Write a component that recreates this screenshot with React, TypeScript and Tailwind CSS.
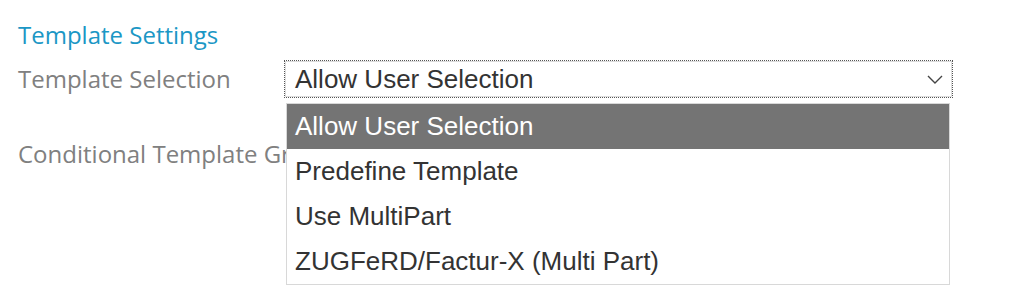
const options = [
  "Allow User Selection",
  "Predefine Template",
  "Use MultiPart",
  "ZUGFeRD/Factur-X (Multi Part)",
];

const labelFont = "font-['Open_Sans','Noto_Sans',sans-serif]";
const selectFont = "font-['Liberation_Sans',Arial,sans-serif]";

function Chevron() {
  return (
    <svg width="16" height="9" viewBox="0 0 16 9" fill="none" className="text-[#444]">
      <polyline points="1,1 8,8 15,1" stroke="currentColor" strokeWidth="1.4" />
    </svg>
  );
}

export default function App() {
  const selected = 0;

  return (
    <div className="h-[304px] w-[1024px] overflow-hidden bg-white">
      <div className="px-[18px] pt-[21px]">
        <h2 className={`${labelFont} text-[24px] leading-[28px] text-[#1b97c5]`}>Template Settings</h2>
        <div className="mt-[12px] grid grid-cols-[267px_667px] items-center">
          <span className={`${labelFont} text-[24px] leading-[36px] text-[#808080]`}>Template Selection</span>
          <div className="relative">
            <div className="outline-1 outline-dotted outline-[#555] outline-offset-0">
              <div className="flex h-[36px] items-center border border-[#dcdcdc] pl-[9px] pr-[8px]">
                <span className={`${selectFont} flex-1 text-[26px] leading-none text-[#333]`}>{options[selected]}</span>
                <Chevron />
              </div>
            </div>
            <ul className="absolute left-[1px] top-[42px] z-10 w-[664px] border border-[#d8d8d8] bg-white">
              {options.map((o, i) => (
                <li
                  key={o}
                  className={`${selectFont} flex h-[45px] items-center px-[8px] text-[26px] ${
                    i === selected ? "bg-[#747474] text-white" : "text-[#333]"
                  }`}
                >
                  {o}
                </li>
              ))}
            </ul>
          </div>
        </div>
        <div className={`${labelFont} mt-[43px] whitespace-nowrap text-[24px] leading-[28px] text-[#808080]`}>
          Conditional Template Group
        </div>
      </div>
    </div>
  );
}
